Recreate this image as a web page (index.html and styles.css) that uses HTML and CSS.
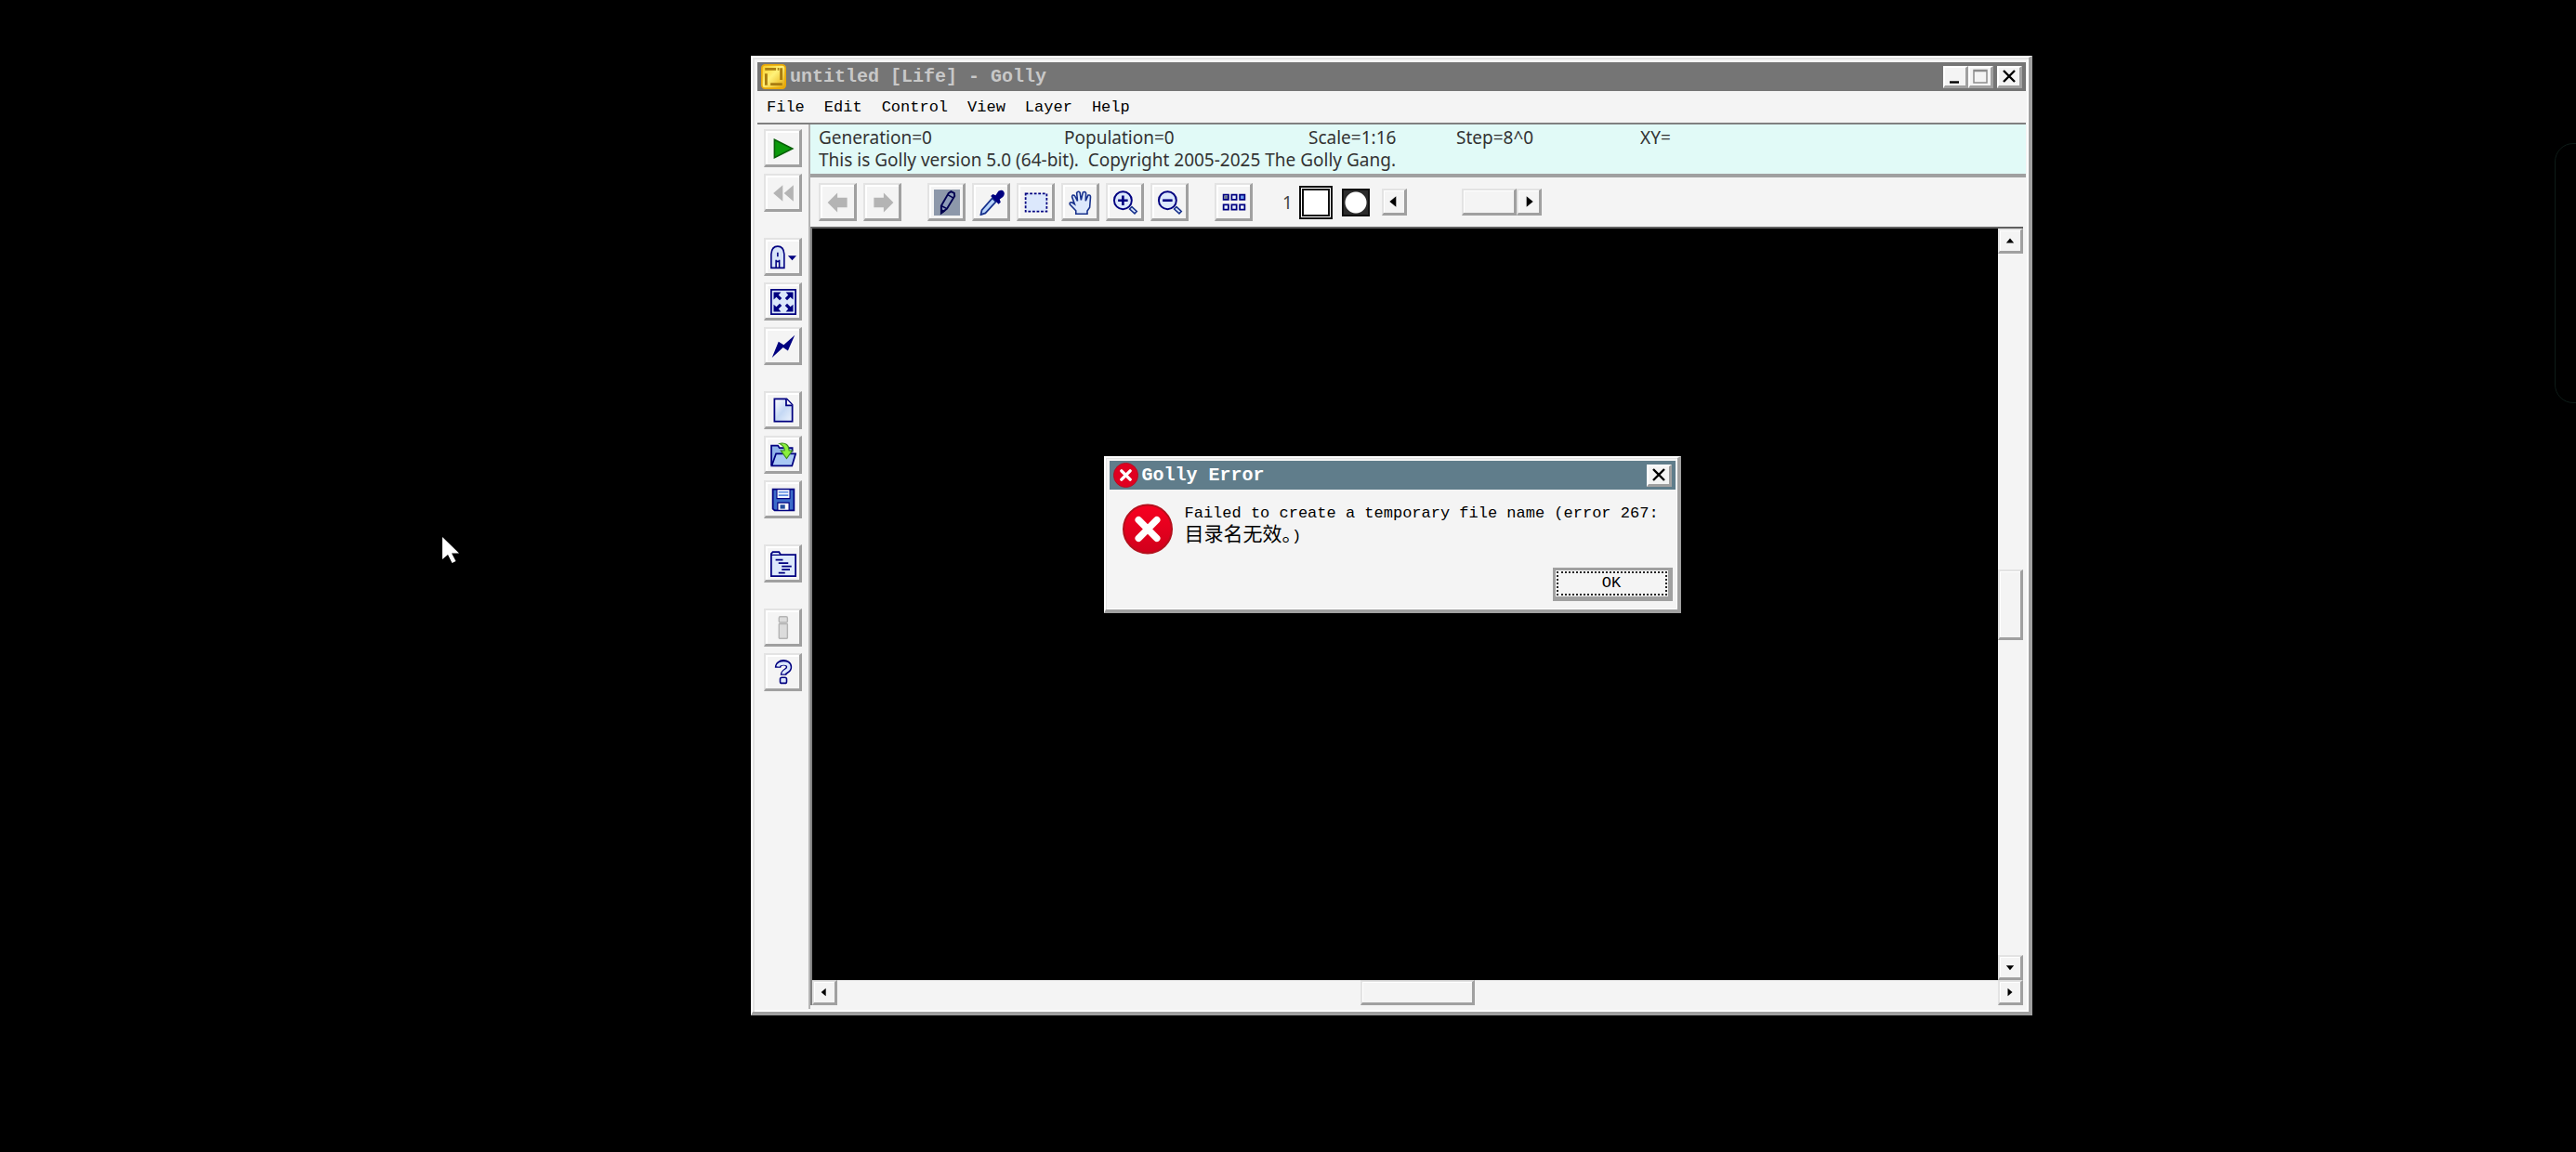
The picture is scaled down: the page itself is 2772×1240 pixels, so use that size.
FILE: index.html
```html
<!DOCTYPE html>
<html lang="en">
<head>
  <meta charset="UTF-8">
  <title>untitled [Life] - Golly</title>
  <link rel="stylesheet" href="styles.css">
</head>
<body>
  <div class="window">
    <header class="titlebar">
      <svg class="app-icon" viewBox="0 0 16 16">
        <defs>
          <linearGradient id="gold" x1="0" y1="0" x2="1" y2="1">
            <stop offset="0" stop-color="#f8c81c"/>
            <stop offset=".45" stop-color="#fff27a"/>
            <stop offset="1" stop-color="#e0a000"/>
          </linearGradient>
        </defs>
        <rect x=".5" y=".5" width="15" height="15" rx="2" fill="url(#gold)" stroke="#e8a808"/>
        <path d="M2.500 3.200h7M3.200 6v7.500M12.800 2.500V10M6 12.800h7.500M10.500 3.200h1" fill="none" stroke="#a87c10" stroke-width="1.700"/>
      </svg>
      <h1>untitled [Life] - Golly</h1>
      <div class="window-buttons">
        <button aria-label="Minimize"><svg viewBox="0 0 16 16"><path d="M2 14.500h10" stroke="#000" stroke-width="2.400"/></svg></button>
        <button aria-label="Maximize"><svg viewBox="0 0 16 16"><path d="M1 1.500h14v13.500H1zM1 2.500h14" fill="none" stroke="#8c8c8c" stroke-width="1.500"/></svg></button>
        <button class="close" aria-label="Close"><svg viewBox="0 0 16 16"><path d="M2 2l12 12M14 2L2 14" stroke="#000" stroke-width="2.400"/></svg></button>
      </div>
    </header>

    <nav class="menubar">
      <button>File</button>
      <button>Edit</button>
      <button>Control</button>
      <button>View</button>
      <button>Layer</button>
      <button>Help</button>
    </nav>

    <main class="main">
      <div class="sidebar">
        <button class="tool" aria-label="Start generating"><svg viewBox="0 0 16 16"><path d="M2.500 2.400L13.600 8 2.500 13.600z" fill="#0c9a0c" stroke="#086008" stroke-width=".9"/></svg></button>
        <button class="tool" aria-label="Reset" disabled><svg viewBox="0 0 16 16"><path d="M1.800 8l5.800-5v10zM8.400 8l5.800-5v10z" fill="#b4b4b4"/></svg></button>

        <button class="tool group" aria-label="Algorithm"><svg viewBox="0 0 16 16">
          <path d="M.5 14.500V6Q.8 1.200 4.500 1.200T8.500 6v8.500h-3v-3h-2v3z" fill="#d7e4f8"/>
          <path d="M.5 14.500V6Q.8 1.200 4.500 1.200T8.500 6v8.500zM3.500 14V9.500M5.500 14V9.500M3.500 10.500h2M4.500 5v2.500" fill="none" stroke="#000080" stroke-width=".9"/>
          <path d="M10.800 7h5.200l-2.600 2.800z" fill="#000080"/>
        </svg></button>
        <button class="tool" aria-label="Auto fit"><svg viewBox="0 0 16 16">
          <path d="M.5.5h15v15H.5z" fill="#dce8fa" stroke="#000080"/>
          <path d="M2 2h4.500L5 3.700l2 2L5.700 7l-2-2L2 6.500zM14 2H9.500L11 3.700l-2 2L10.300 7l2-2L14 6.500zM2 14h4.500L5 12.300l2-2L5.700 9l-2 2L2 9.500zM14 14H9.500L11 12.300l-2-2L10.300 9l2 2L14 9.500z" fill="#000080"/>
        </svg></button>
        <button class="tool" aria-label="Hyperspeed"><svg viewBox="0 0 16 16"><path d="M15 1L10.800 10.500 7.800 8.600 1 14.800 5 5l3.200 2z" fill="#000080"/></svg></button>

        <button class="tool group" aria-label="New pattern"><svg viewBox="0 0 16 16">
          <defs><linearGradient id="paper" x1="0" y1="0" x2="1" y2="1"><stop offset="0" stop-color="#fff"/><stop offset=".5" stop-color="#c4d8f4"/><stop offset="1" stop-color="#eef4fd"/></linearGradient></defs>
          <path d="M2.500.8h7.500l3.500 3.700v10.200h-11z" fill="url(#paper)" stroke="#000080"/><path d="M9.700.8v4h3.800" fill="#fff" stroke="#000080"/>
        </svg></button>
        <button class="tool" aria-label="Open pattern"><svg viewBox="0 0 16 16">
          <path d="M.6 14.300V2h4l1 1.500h7.900V6" fill="#8fb2e8" stroke="#000080"/>
          <path d="M.8 14.500L3.500 7h12l-2.200 7.500z" fill="#a9c8f4" stroke="#000080"/>
          <path d="M5.500.8c4-.8 6 1 6 4.300h2l-3.500 5-3.600-5h2.300c0-2-1-3.200-3.200-4.300z" fill="#8af03c" stroke="#3c8a20" stroke-width=".6"/>
        </svg></button>
        <button class="tool" aria-label="Save pattern"><svg viewBox="0 0 16 16">
          <path d="M1.500 1.500h13v13H2.600l-1.100-1z" fill="#3c6cc8" stroke="#000080"/>
          <path d="M4 1.500h8v5.700H4z" fill="#f2f7ff" stroke="#000080" stroke-width=".6"/><path d="M5 3.300h6M5 5.200h6" stroke="#5c8ce0" stroke-width=".9"/>
          <path d="M4.500 9.800h7v4.700h-7z" fill="#fff" stroke="#000080" stroke-width=".7"/><path d="M6 11h3v2.500H6z" fill="#234c9c"/>
        </svg></button>

        <button class="tool group" aria-label="Show files"><svg viewBox="0 0 16 16">
          <path d="M.5 15.500V1.800L1.500.6h3.800l1 1.700h9.200v13.200z" fill="#dde9fc" stroke="#000080"/>
          <path d="M.5 2.500h6" stroke="#000080" stroke-width=".7"/>
          <path d="M3.200 5.500h4.500M5 7.500h6M7 9.500h6M7 11.500h5M5 13.500h4" stroke="#000080" stroke-width=".9"/>
        </svg></button>

        <button class="tool group" aria-label="Pattern info" disabled><svg viewBox="0 0 16 16"><rect x="5.300" y="1" width="5.200" height="3.600" rx=".8" fill="#dcdcdc" stroke="#b4b4b4" stroke-width=".8"/><rect x="5.300" y="5.400" width="5.200" height="9" rx=".4" fill="#dcdcdc" stroke="#b4b4b4" stroke-width=".8"/></svg></button>
        <button class="tool" aria-label="Help"><svg viewBox="0 0 16 16">
          <path d="M4.600 5C4.600.9 11.400.9 11.400 4.500 11.400 7.300 8 6.800 8 9.500" fill="none" stroke="#000080" stroke-width="3.700"/>
          <path d="M4.600 4.300C5 1.700 11.400 1.300 11.400 4.500 11.400 7.100 8 6.800 8 8.800" fill="none" stroke="#dce8fc" stroke-width="2"/>
          <rect x="6" y="11" width="4" height="3.500" rx="1" fill="#dce8fc" stroke="#000080" stroke-width=".9"/>
        </svg></button>
      </div>

      <div class="pane">
        <div class="status">
          <div class="status-row">
            <span>Generation=0</span><span>Population=0</span><span>Scale=1:16</span><span>Step=8^0</span><span>XY=</span>
          </div>
          <div>This is Golly version 5.0 (64-bit).&nbsp; Copyright 2005-2025 The Golly Gang.</div>
        </div>

        <div class="toolbar">
          <button class="tool" aria-label="Undo" disabled><svg viewBox="0 0 16 16"><path d="M1.500 8l6-6v3h6v6h-6v3z" fill="#b4b4b4"/></svg></button>
          <button class="tool" aria-label="Redo" disabled><svg viewBox="0 0 16 16"><path d="M14.500 8l-6-6v3h-6v6h6v3z" fill="#b4b4b4"/></svg></button>
          <button class="tool group pressed" aria-label="Draw"><svg viewBox="0 0 16 16">
            <path d="M4.500 10L9 2.200l1.500-1 2 1 .2 1.800L8 11.800l-3.500 2.700z" fill="#8d9cb8" stroke="#000050" stroke-width="1.100"/>
            <path d="M8.500 3.200l3.500 2M4.500 10L8 11.800M4.500 14.500l.2-2 1.500.8z" stroke="#000050" stroke-width=".9"/>
          </svg></button>
          <button class="tool" aria-label="Pick"><svg viewBox="0 0 16 16">
            <path d="M8.500 5.300l2.200 2.200-6.500 7-2.800 1 .6-2.800z" fill="#b8d4fa" stroke="#16308c"/>
            <path d="M7.500 4l1.300-1.200 1.700.7 1.700-2.500q2.300-1.200 3.300.3t-.5 3.200l-2 1.500.6 1.800L12.300 9z" fill="#000080"/>
          </svg></button>
          <button class="tool" aria-label="Select"><svg viewBox="0 0 16 16"><path d="M1.500 2.500h13v11h-13z" fill="#dce8fc" stroke="#000080" stroke-dasharray="1.600 1"/></svg></button>
          <button class="tool" aria-label="Move"><svg viewBox="0 0 16 16"><path d="M5 15v-2L1.300 9.200Q.8 7.600 2.800 8L4.200 9 2.600 4.500Q2.800 2.800 4.200 3.700L6 7 5.500 2Q6.500.6 7.500 1.800L8.200 6.500 9.300 1.800Q10.500.8 11.200 2.200L11 7l1.500-3.500q1.400-.4 1.500 1L13.500 11 12 13.200V15z" fill="#dce8fc" stroke="#16308c" stroke-width=".9"/></svg></button>
          <button class="tool" aria-label="Zoom in"><svg viewBox="0 0 16 16">
            <circle cx="6.500" cy="6.700" r="5.400" fill="#dce8fc" stroke="#000080" stroke-width="1.100"/>
            <path d="M6.500 3.700v6M3.500 6.700h6" stroke="#000080" stroke-width="1.500"/>
            <path d="M10.600 12L12 10.600l3 2.800-1.300 1.400z" fill="#dce8fc" stroke="#16308c" stroke-width=".9"/>
          </svg></button>
          <button class="tool" aria-label="Zoom out"><svg viewBox="0 0 16 16">
            <circle cx="6.500" cy="6.700" r="5.400" fill="#dce8fc" stroke="#000080" stroke-width="1.100"/>
            <path d="M3.500 6.700h6" stroke="#000080" stroke-width="1.500"/>
            <path d="M10.600 12L12 10.600l3 2.800-1.300 1.400z" fill="#dce8fc" stroke="#16308c" stroke-width=".9"/>
          </svg></button>
          <button class="tool group" aria-label="All states"><svg viewBox="0 0 16 16">
            <path d="M1.500 3.200h3v3h-3zM6.500 3.200h3v3h-3zM1.500 9.300h3v3h-3zM6.500 9.300h3v3h-3zM11.500 9.300h3v3h-3z" fill="#eaf2ff" stroke="#000080"/>
            <path d="M11.500 3.200h3v3h-3z" fill="#6c9cf0" stroke="#000080"/><path d="M2 3.700h2v2H2z" fill="#707a90"/>
          </svg></button>

          <span class="state-number">1</span>
          <div class="state-color"></div>
          <div class="state-icon"></div>
          <div class="slider">
            <button class="arrow" aria-label="Previous state"><svg viewBox="0 0 12 12"><path d="M8 1v10L2 6z"/></svg></button>
            <div class="slider-track"><div class="thumb"></div></div>
            <button class="arrow" aria-label="Next state"><svg viewBox="0 0 12 12"><path d="M4 1v10l6-5z"/></svg></button>
          </div>
        </div>

        <div class="viewport">
          <div class="canvas"></div>
          <div class="scroll vertical">
            <button class="arrow small" aria-label="Scroll up"><svg viewBox="0 0 12 12"><path d="M1 9h10L6 3z"/></svg></button>
            <div class="track"><div class="thumb"></div></div>
            <button class="arrow small" aria-label="Scroll down"><svg viewBox="0 0 12 12"><path d="M1 4h10L6 10z"/></svg></button>
          </div>
          <div class="scroll horizontal">
            <button class="arrow small" aria-label="Scroll left"><svg viewBox="0 0 12 12"><path d="M8 1v10L2 6z"/></svg></button>
            <div class="track"><div class="thumb"></div></div>
            <button class="arrow small" aria-label="Scroll right"><svg viewBox="0 0 12 12"><path d="M3 1v10l6-5z"/></svg></button>
          </div>
        </div>
      </div>
    </main>

    <div class="overlay">
      <div class="dialog" role="alertdialog" aria-labelledby="dialog-title">
        <header class="titlebar active">
          <svg class="app-icon" viewBox="0 0 32 32"><circle cx="16" cy="16" r="15.500" fill="#e00020" stroke="#b00c1c"/><path d="M10.500 10.500l11 11M21.500 10.500l-11 11" stroke="#fff" stroke-width="4" stroke-linecap="round"/></svg>
          <h2 id="dialog-title">Golly Error</h2>
          <div class="window-buttons">
            <button aria-label="Close dialog"><svg viewBox="0 0 16 16"><path d="M2 2l12 12M14 2L2 14" stroke="#000" stroke-width="2.400"/></svg></button>
          </div>
        </header>
        <div class="message">
          <svg class="error-icon" viewBox="0 0 32 32">
            <defs><linearGradient id="red" x1="0" y1="0" x2="0" y2="1"><stop offset="0" stop-color="#f80020"/><stop offset="1" stop-color="#d0001c"/></linearGradient></defs>
            <circle cx="16" cy="16" r="15.400" fill="url(#red)" stroke="#b4101c" stroke-width="1.200"/>
            <path d="M10.200 10.200l11.600 11.600M21.800 10.200L10.200 21.800" stroke="#fff" stroke-width="4.400" stroke-linecap="round"/>
          </svg>
          <p>Failed to create a temporary file name (error 267:<br><span lang="zh">目录名无效。</span>)</p>
        </div>
        <div class="actions">
          <button class="ok"><span>OK</span></button>
        </div>
      </div>
    </div>
  </div>

  <div class="edge-panel"></div>

  <svg class="cursor" viewBox="0 0 18 29"><path d="M0 0v24l6-5 4.500 9 4-2-4.500-8.500h8z" fill="#fff"/></svg>
</body>
</html>
```

FILE: styles.css
```css
:root {
  --face: #f4f4f4;
  --light: #e3e3e3;
  --shadow: #a0a0a0;
  --mono: "Liberation Mono", "Noto Sans CJK SC", monospace;
}

* {
  box-sizing: border-box;
}

body {
  margin: 0;
  height: 100vh;
  overflow: hidden;
  position: relative;
  background: #000;
  color: #000;
  font-family: var(--mono);
  font-size: 17px;
}

button {
  margin: 0;
  padding: 0;
  font: inherit;
  color: inherit;
  background: var(--face);
  border: none;
}

svg {
  display: block;
}

/* main window */
.window {
  position: absolute;
  top: 60px;
  right: 585px;
  bottom: 147px;
  left: 808px;
  display: flex;
  flex-direction: column;
  padding: 5px 3px 3px 5px;
  background: var(--face);
  border: 2px solid #fff;
  border-right: 4px solid var(--shadow);
  border-bottom: 4px solid var(--shadow);
  box-shadow: inset 2px 2px 0 var(--light), inset -2px -2px 0 #fff;
}

.titlebar {
  display: flex;
  align-items: center;
  height: 31px;
  flex-shrink: 0;
  padding: 0 4px;
  gap: 4px;
  background: #757575;
  color: #c8c8c8;
}

.titlebar.active {
  background: #607d8b;
  color: #fff;
}

.titlebar h1,
.titlebar h2 {
  flex: 1;
  margin: 0;
  font-size: 20px;
  line-height: 24px;
  font-weight: bold;
}

.app-icon {
  width: 27px;
  height: 27px;
}

.window-buttons {
  display: flex;
}

.window-buttons button {
  display: flex;
  align-items: center;
  justify-content: center;
  width: 27px;
  height: 24px;
  border: 2px solid #fff;
  border-right: 3px solid var(--shadow);
  border-bottom: 3px solid var(--shadow);
}

.window-buttons .close {
  margin-left: 4px;
}

.window-buttons svg {
  width: 16px;
  height: 16px;
}

.menubar {
  display: flex;
  gap: 21px;
  height: 36px;
  flex-shrink: 0;
  padding: 2px 10px 0;
  border-bottom: 2px solid #808080;
}

.menubar button {
  line-height: 32px;
}

.main {
  flex: 1;
  display: flex;
  min-height: 0;
}

.sidebar {
  display: flex;
  flex-direction: column;
  gap: 7px;
  width: 57px;
  padding: 5px 7px;
  border-right: 2px solid #b4b4b4;
}

.tool {
  display: flex;
  align-items: center;
  justify-content: center;
  flex-shrink: 0;
  width: 41px;
  height: 41px;
  padding: 2px 0 0 2px;
  border: 2px solid var(--light);
  border-right: 3px solid var(--shadow);
  border-bottom: 3px solid var(--shadow);
  box-shadow: inset 2px 2px 0 #fff;
}

.tool svg {
  width: 28px;
  height: 28px;
}

.tool.pressed svg {
  background: #8d98aa;
}

.sidebar .group {
  margin-top: 21px;
}

.toolbar .group {
  margin-left: 21px;
}

.pane {
  flex: 1;
  display: flex;
  flex-direction: column;
  min-width: 0;
}

.status {
  height: 57px;
  flex-shrink: 0;
  padding: 2px 9px;
  background: #e1faf7;
  border-bottom: 4px solid var(--shadow);
  color: #333;
  font-family: "Noto Sans", sans-serif;
  font-size: 19px;
  line-height: 24px;
  white-space: nowrap;
}

.status-row {
  display: grid;
  grid-template-columns: 264px 263px 159px 198px 1fr;
}

.toolbar {
  display: flex;
  align-items: center;
  gap: 7px;
  height: 53px;
  flex-shrink: 0;
  padding: 0 9px;
}

.state-number {
  width: 36px;
  padding-left: 25px;
  font-family: "Noto Sans", sans-serif;
  font-size: 19px;
  color: #444;
}

.state-color {
  width: 36px;
  height: 36px;
  background: #fff;
  border: 5px double #111;
}

.state-icon {
  width: 30px;
  height: 30px;
  margin-left: 3px;
  border: 2px solid #111;
  background: radial-gradient(circle, #fff 11px, #2c2c2c 12px);
}

.slider {
  display: flex;
  height: 29px;
  margin-left: 6px;
}

.slider-track {
  display: flex;
  justify-content: flex-end;
  width: 118px;
}

.slider .thumb {
  width: 59px;
}

.arrow {
  display: flex;
  align-items: center;
  justify-content: center;
  width: 27px;
}

.arrow,
.thumb {
  background: var(--face);
  border: 2px solid var(--light);
  border-right: 3px solid var(--shadow);
  border-bottom: 3px solid var(--shadow);
  box-shadow: inset 1px 1px 0 #fff;
}

.arrow svg {
  width: 14px;
  height: 14px;
}

.arrow.small svg {
  width: 10px;
  height: 10px;
}

/* pattern view and its scroll bars */
.viewport {
  flex: 1;
  display: grid;
  grid-template-columns: 1fr 27px;
  grid-template-rows: 1fr 27px;
  min-height: 0;
  margin: 0 3px 4px 0;
  border-top: 2px solid #606060;
  border-left: 2px solid #808080;
}

.canvas {
  background: #000;
}

.scroll {
  display: flex;
  background: var(--face);
}

.vertical {
  flex-direction: column;
}

.horizontal {
  grid-column: 1 / 3;
}

.vertical .arrow {
  width: 100%;
  height: 27px;
}

.track {
  flex: 1;
  display: flex;
  align-items: center;
  justify-content: center;
}

.vertical .thumb {
  width: 100%;
  height: 76px;
}

.horizontal .thumb {
  width: 123px;
  height: 100%;
}

/* error dialog */
.overlay {
  position: absolute;
  inset: 0;
  display: flex;
  align-items: center;
  justify-content: center;
  padding-left: 3px;
}

.dialog {
  width: 621px;
  padding: 3px 2px 9px 4px;
  background: var(--face);
  border: 2px solid #fff;
  border-right: 4px solid var(--shadow);
  border-bottom: 4px solid var(--shadow);
  box-shadow: inset 1px 1px 0 var(--light), inset -1px -1px 0 #fff;
}

.message {
  display: flex;
  gap: 13px;
  padding: 15px 0 14px 14px;
}

.message p {
  margin: 0;
  line-height: 21px;
  white-space: nowrap;
}

.message p span {
  font-family: "Noto Sans CJK SC", sans-serif;
  font-size: 21px;
}

.error-icon {
  width: 54px;
  height: 55px;
}

.actions {
  display: flex;
  justify-content: flex-end;
  padding-right: 3px;
}

.ok {
  width: 129px;
  height: 36px;
  padding: 1px;
  border: 3px solid var(--shadow);
  border-right-width: 5px;
  border-bottom-width: 5px;
  box-shadow: inset 2px 2px 0 #fff;
}

.ok span {
  display: block;
  line-height: 22px;
  border: 2px dotted #222;
}

.edge-panel {
  position: absolute;
  top: 154px;
  right: -20px;
  width: 43px;
  height: 280px;
  border: 1px solid #0e1c18;
  border-radius: 20px;
}

.cursor {
  position: absolute;
  top: 578px;
  left: 476px;
  width: 18px;
  height: 29px;
}
```
